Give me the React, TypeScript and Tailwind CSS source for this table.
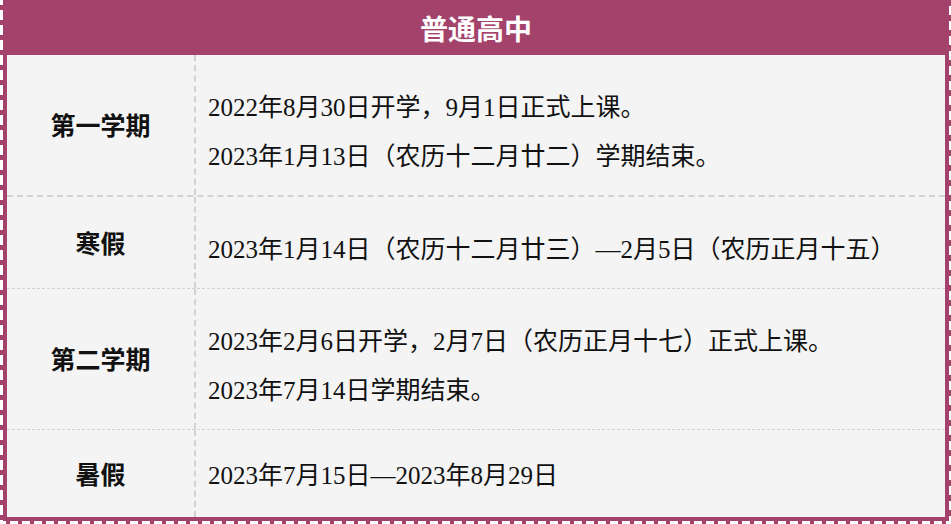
import React from "react";

const rows: { label: string; lines: string[]; h: string; border: string; pt: string }[] = [
  {
    label: "第一学期",
    lines: ["2022年8月30日开学，9月1日正式上课。", "2023年1月13日（农历十二月廿二）学期结束。"],
    h: "h-[142px]",
    border: "border-b-2",
    pt: "pt-[13px]",
  },
  {
    label: "寒假",
    lines: ["2023年1月14日（农历十二月廿三）—2月5日（农历正月十五）"],
    h: "h-[92px]",
    border: "border-b",
    pt: "pt-[13px]",
  },
  {
    label: "第二学期",
    lines: ["2023年2月6日开学，2月7日（农历正月十七）正式上课。", "2023年7月14日学期结束。"],
    h: "h-[141px]",
    border: "border-b",
    pt: "pt-[13px]",
  },
  {
    label: "暑假",
    lines: ["2023年7月15日—2023年8月29日"],
    h: "flex-1",
    border: "",
    pt: "pt-[4px]",
  },
];

export default function App() {
  return (
    <div className="w-[951px] h-[524px] flex flex-col bg-white overflow-hidden">
      <div className="flex flex-1 min-h-0">
        <div className="w-[3px] bg-[repeating-linear-gradient(to_bottom,transparent_0px,transparent_5px,#a3426b_5px,#a3426b_10px,transparent_10px,transparent_15px)]" />
        <div className="flex-1 flex flex-col min-w-0">
          <div className="h-[55px] bg-[#a3426b] flex items-center justify-center text-white text-[28px] font-bold font-['Noto_Sans_CJK_SC',sans-serif] leading-none">
            普通高中
          </div>
          <div className="flex-1 flex flex-col border-x-4 border-b-4 border-[#a3426b] bg-[#f4f4f4]">
            {rows.map((r) => (
              <div
                key={r.label}
                className={`flex ${r.h} ${r.border} border-dashed border-[#d2d2d2]`}
              >
                <div className="w-[189px] shrink-0 border-r-2 border-dashed border-[#d2d2d2] flex items-center justify-center text-[25px] font-bold text-[#111] font-['Noto_Sans_CJK_SC',sans-serif]">
                  {r.label}
                </div>
                <div className={`flex-1 flex flex-col justify-center pl-[12px] ${r.pt} text-[25px] leading-[49px] text-[#111] font-['Liberation_Serif','Noto_Sans_CJK_SC',serif] whitespace-nowrap`}>
                  {r.lines.map((l) => (
                    <div key={l}>{l}</div>
                  ))}
                </div>
              </div>
            ))}
          </div>
        </div>
        <div className="w-[2px] bg-[repeating-linear-gradient(to_bottom,#a3426b_0px,#a3426b_6px,transparent_6px,transparent_15px)]" />
      </div>
      <div className="h-[3px] bg-[repeating-linear-gradient(to_right,transparent_0px,transparent_6px,#a3426b_6px,#a3426b_10px,transparent_10px,transparent_12px)]" />
    </div>
  );
}
